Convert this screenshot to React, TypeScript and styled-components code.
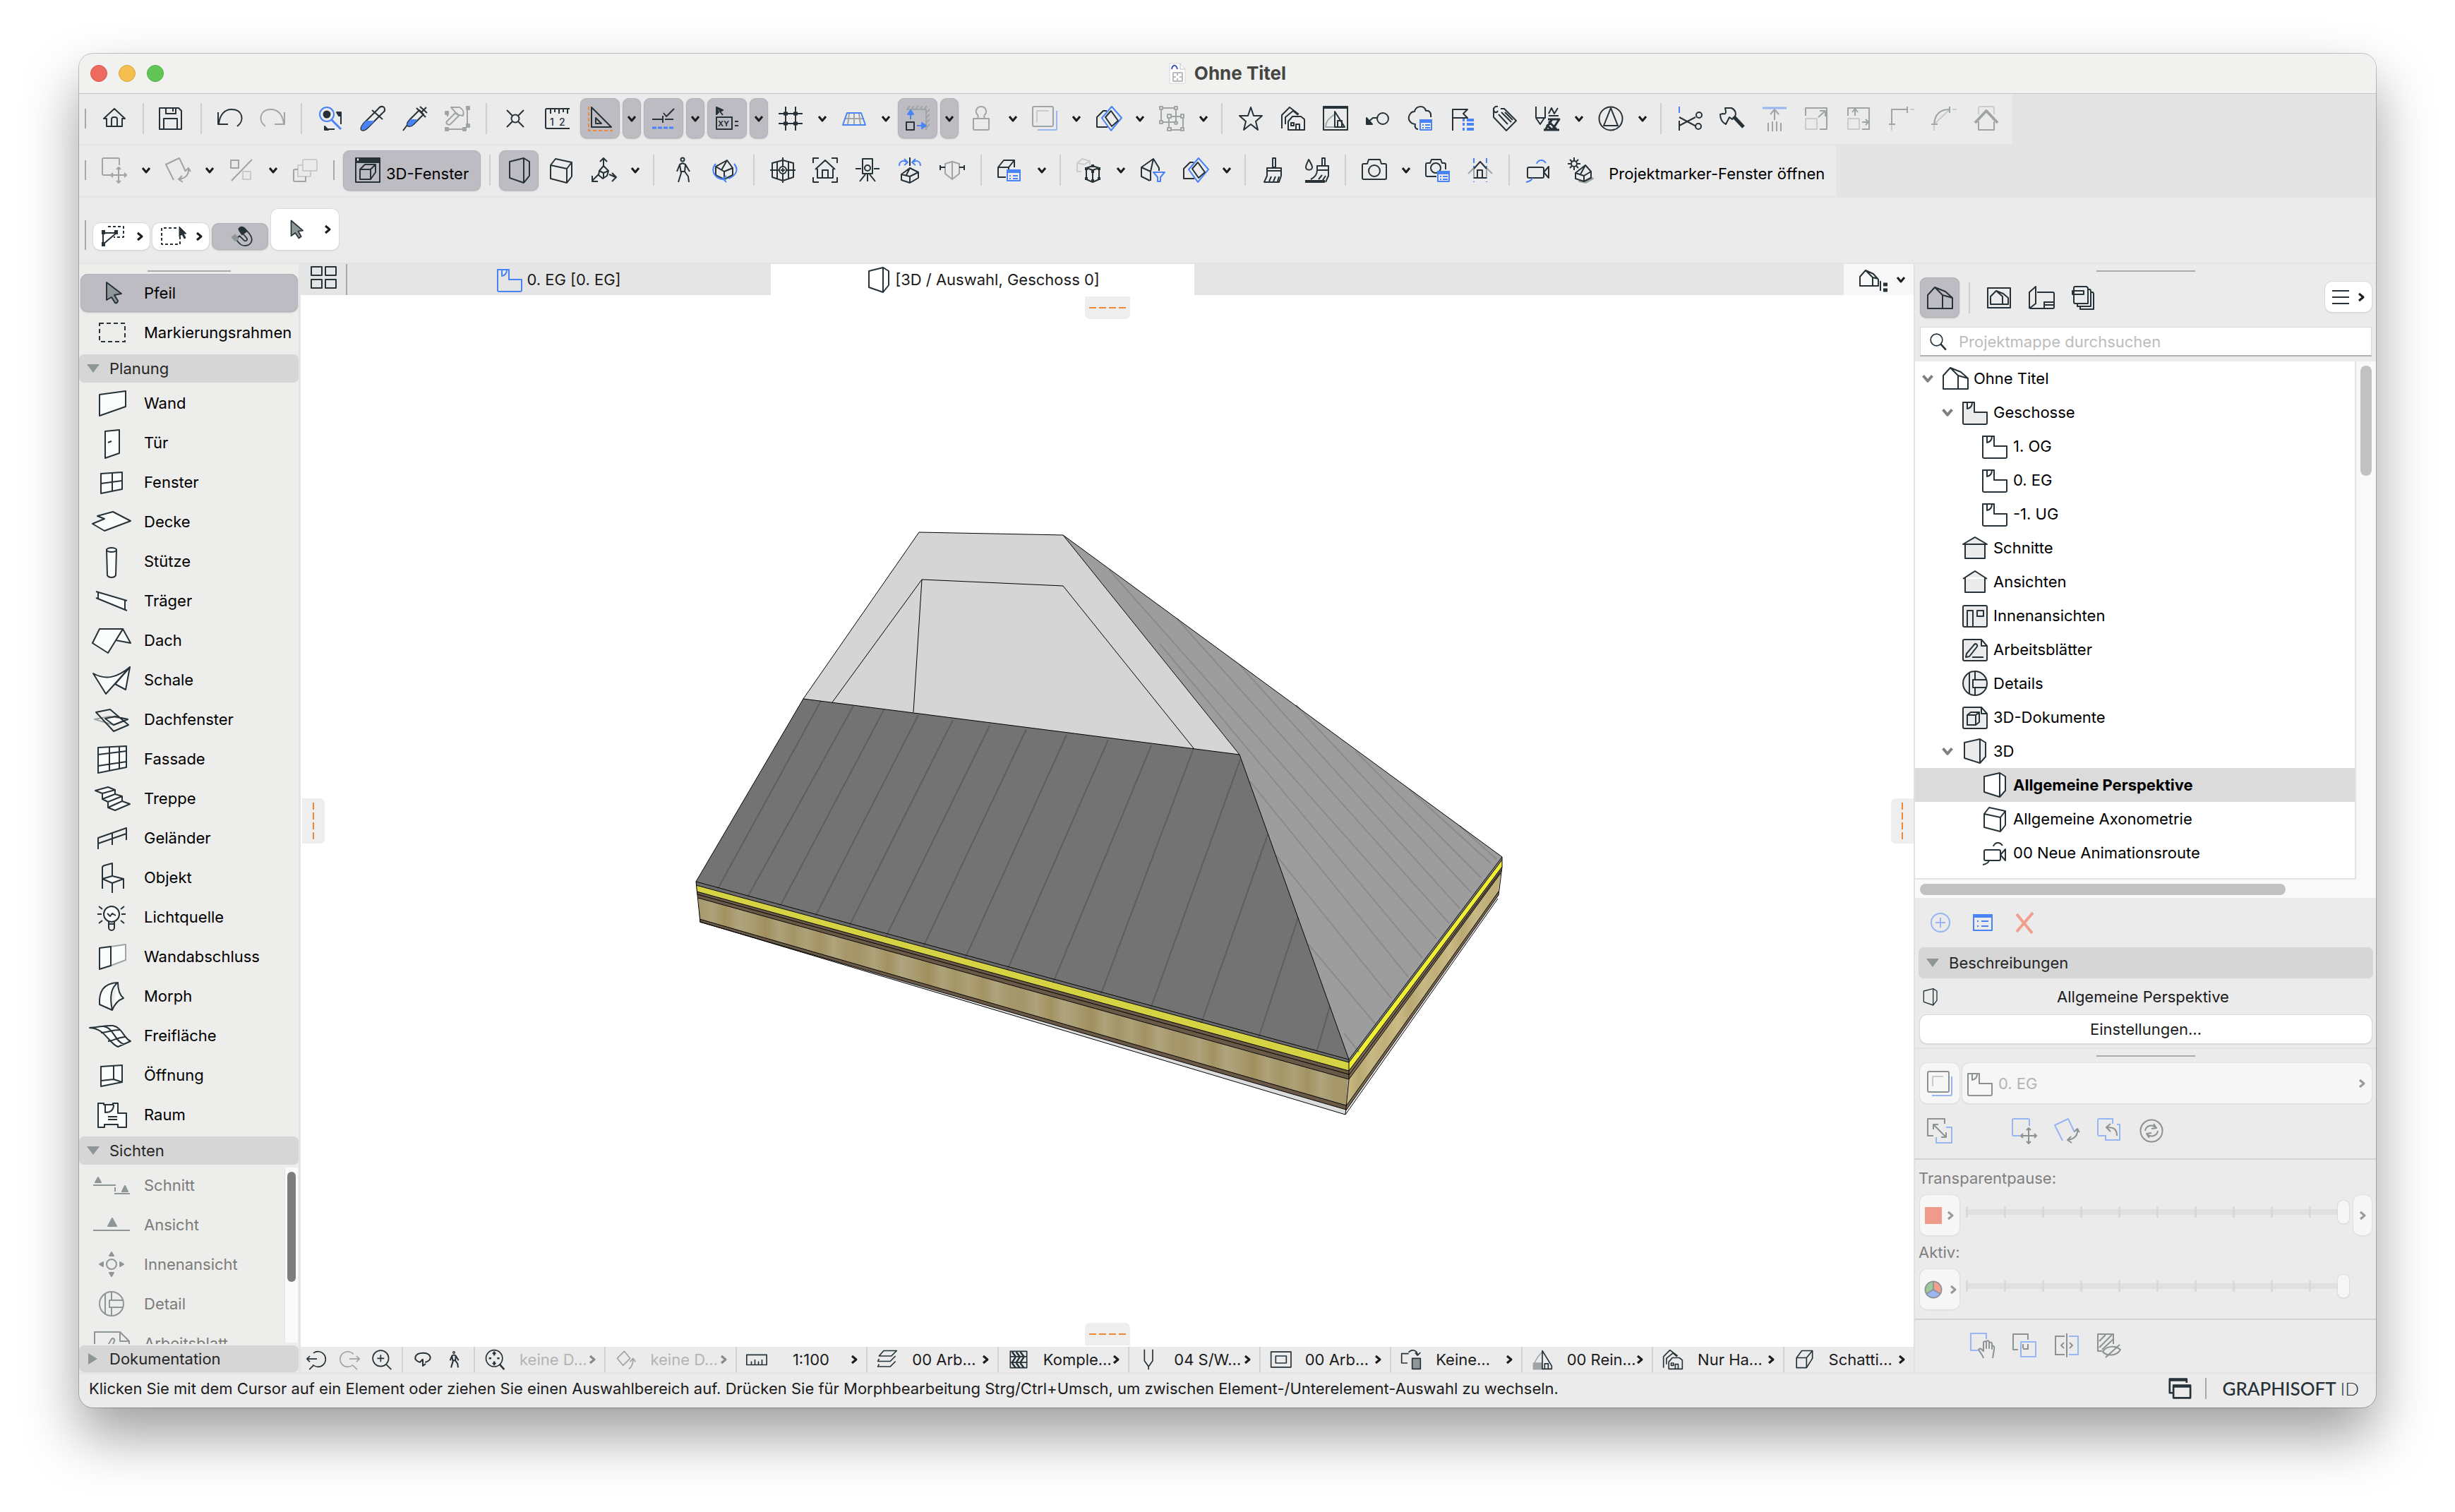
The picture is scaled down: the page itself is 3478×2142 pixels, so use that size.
import React from 'react';
import styled, { createGlobalStyle, css } from 'styled-components';

const K = '#263238';
const B = '#4a83f5';
const LB = '#98b5f3';
const G = '#9fa4a6';
const L = '#c9cccd';
const O = '#ef8733';
const TOOL = '#fafbfb';

/* ---------- icon drawings ---------- */

const P = ({ d, s = 'currentColor', f = 'none', w, dash }: { d: string; s?: string; f?: string; w?: number; dash?: string }) => (
  <path d={d} stroke={s} fill={f} strokeWidth={w} strokeDasharray={dash} />
);
const C = ({ x, y, r, s = 'currentColor', f = 'none' }: { x: number; y: number; r: number; s?: string; f?: string }) => (
  <circle cx={x} cy={y} r={r} stroke={s} fill={f} />
);

const listBadge = (c: string) => (
  <>
    <P d="M18 20h16v14H18z" s={c} f="#ebebeb" />
    <P d="M18 20h16v3H18z" s={c} f={c} />
    <P d="M21 27h2M25 27h7M21 31h2M25 31h7" s={c} />
  </>
);
const cutPlane = (
  <>
    <P d="M17 30H2V16L11 7h5" />
    <P d="M23 1L9 17l13 18 15-18z" s={B} />
    <P d="M22 7l-8 9 9 13 9-8z" />
  </>
);
const houseBig = <P d="M1 33V14L11 3l11 11v19H1zM22 33h14V18L26 9 11 3M22 14l14 4" />;
const plan = <P d="M1 4h16v14h18v15a2 2 0 01-2 2H3a2 2 0 01-2-2zM7 4v9c5-1 7-4 7-9" />;
const persp = <P d="M5 6l20-5 8 5v20l-8 10-20-7zM25 1v34" />;
const axo = <P d="M3 11l7-9 23 5v20l-7 9-23-6zM3 11l23 5 7-9M26 16v20" />;
const walker = (
  <>
    <C x={18} y={3} r={2.5} />
    <P d="M18 8l-4 2-4 10M18 8l4 2 6 10M14 11l2 11-4 13M22 11l-1 9 5 7 1 8M16 20h5" />
  </>
);
const camcorder = (a: string) => (
  <>
    <P d="M5 14h19a2 2 0 012 2v11a2 2 0 01-2 2H5a2 2 0 01-2-2V16a2 2 0 012-2zM26 21l7-8v16z" />
    <P d="M16 9c2-6 9-7 13-1M1 35c6-1 8-3 9-6" s={a} />
  </>
);
const squaresMove = (a: string, b: string) => (
  <>
    <P d="M12 25H3a2 2 0 01-2-2V3a2 2 0 012-2h20a2 2 0 012 2v8" s={a} />
    <P d="M24 14v22M13 25h22M21 17l3-3 3 3M21 33l3 3 3-3M16 22l-3 3 3 3M32 22l3 3-3 3" s={b} />
  </>
);
const squareRotate = (a: string, b: string) => (
  <>
    <P d="M12 32L1 10 20 1l9 19" s={a} />
    <P d="M33 16c1 8-4 14-14 15M29 19l4-4 3 5M24 26l-5 5 6 4" s={b} />
  </>
);
const docOutline = 'M3 4h24l8 9v19a2 2 0 01-2 2H3a2 2 0 01-2-2V6a2 2 0 012-2zM27 4v9h8';
const houses = (
  <>
    <P d="M2 32V13L13 2l13 10M7 26V16l11-9 7 6" />
    <P d="M11 34V22l6-7h12l5 4v15zM22 34v-8h5v8M15 24h4v4h-4z" />
  </>
);
const windowTri = (
  <>
    <P d="M1 3h34v31H1z" />
    <P d="M1 1h34v2H1z" f="currentColor" />
    <P d="M17 30H4c0-8 6-14 13-18" s={G} />
    <P d="M17 30V8l14 22zM21 30v-9h6v9" />
  </>
);

const ICONS: Record<string, React.ReactNode> = {
  home: <P d="M3 18L18 4l15 14h-4v11H7V18zM14 29V19a3 3 0 013-3h2a3 3 0 013 3v10" />,
  save: <P d="M0 3h27l4 4v26H0zM9 3v8h14V3M19 3v5M6 33V18h19v15" />,
  undo: <P d="M1 9v17h14M2 26C3 13 10 5 20 5c16 0 19 16 8 24" />,
  redo: <P d="M35 9v17H21M34 26C33 13 26 5 16 5 0 5-3 21 8 29" s={G} />,
  find: (
    <>
      <C x={13} y={12} r={10} s={B} />
      <C x={13} y={12} r={4.5} f="currentColor" />
      <P d="M20 20l13 13" s={B} w={3} />
      <P d="M33 14v12M12 33h12" />
      <P d="M27 9h6v5h-3zM10 29v5h5z" f="currentColor" />
    </>
  ),
  pipette: (
    <>
      <P d="M2 34c-2-3 1-6 3-9L26 4c2-3 5-4 8-2 2 3 1 6-2 8L11 31c-3 3-6 5-9 3z" />
      <P d="M3 33c-1-3 2-6 6-11h10L10 30c-3 3-5 4-7 3z" f={B} s={B} />
      <P d="M17 6l15 13" />
    </>
  ),
  syringe: (
    <>
      <P d="M1 35l6-8M7 28c-1-5 2-6 4-9L24 6l6 6-14 14c-3 3-6 4-9 2z" />
      <P d="M8 27c0-3 2-5 4-7h8l-6 6c-2 2-4 2-6 1z" f={B} s={B} />
      <P d="M20 3l13 13M27 9l7-7M25 1l10 9" />
    </>
  ),
  hammerNodes: (
    <>
      <P d="M3 22L15 10l5 4L8 26c-3 2-7-1-5-4zM9 2h12c5 3 7 6 5 12l-6-1-5-4zM4 11v4M32 6v22M6 33h22" s={G} />
      <P d="M1 8h4v4H1zM31 1h4v4h-4zM1 31h4v4H1zM31 26h4v4h-4zM26 31h4v4h-4z" s={G} f={G} />
    </>
  ),
  snap: (
    <>
      <C x={18} y={18} r={5.5} />
      <P d="M6 6l8 8M30 6l-8 8M6 30l8-8M30 30l-8-8" />
    </>
  ),
  ruler: (
    <>
      <P d="M35 4H3a2 2 0 00-2 2v24a2 2 0 002 2h32M8 4v7M14 4v5M20 4v7M26 4v5M32 4v7" />
      <text x="7" y="28" fontSize="14" fontWeight="500" fill="currentColor">1</text>
      <text x="20" y="28" fontSize="14" fontWeight="500" fill="currentColor">2</text>
    </>
  ),
  triangle: (
    <>
      <P d="M6 2v28h28zM12 17v8h8z" />
      <P d="M2 1v34h34" s={O} dash="5 3" />
    </>
  ),
  guides: (
    <>
      <P d="M2 19h14M20 19h12M17 14v10M18 10l4 5L33 4" />
      <P d="M2 31h32" s={B} w={3} dash="6 2" />
    </>
  ),
  coords: (
    <>
      <P d="M3 2l9 4-4 2 4 5M3 2v10l3-3z" f="currentColor" />
      <P d="M3 16h22v17H3z" />
      <text x="5" y="29" fontSize="11" fontWeight="700" fill="currentColor">XY</text>
      <P d="M29 22h5M29 28h5" />
    </>
  ),
  grid: (
    <>
      <P d="M1 11h34M1 25h34M11 1v34M25 1v34" />
      <P d="M8 11h6M22 11h6M8 25h6M22 25h6" w={5} />
    </>
  ),
  plane: (
    <>
      <P d="M4 18h28M11 11l-2 16M18 10v17M25 11l2 16" s={G} />
      <P d="M8 10h20l6 17H2z" s={B} />
    </>
  ),
  gravity: (
    <>
      <P d="M2 5h28v29M3 5l4-5M9 5l4-5M15 5l4-5M21 5l4-5M27 5l4-5M30 10l5-5M30 17l5-5M30 24l5-5M30 31l5-5" s={G} />
      <P d="M2 23h11v11H2z" />
      <P d="M8 19V7M17 28h9" s={B} />
      <P d="M4 12l4-6 4 6zM24 24l6 4-6 4z" s={B} f={B} />
    </>
  ),
  stamp: <P d="M7 18h22v14a2 2 0 01-2 2H9a2 2 0 01-2-2zM13 18c2-4 0-5-2-8-1-5 2-9 7-9s8 4 7 9c-2 3-4 4-2 8" s={G} />,
  trace: (
    <>
      <P d="M8 34h25a2 2 0 002-2V7" s={LB} />
      <P d="M3 1h25a2 2 0 012 2v24a2 2 0 01-2 2H3a2 2 0 01-2-2V3a2 2 0 012-2z" s={G} />
      <P d="M7 23V7h17" s={L} />
    </>
  ),
  cutPlane,
  groupNodes: (
    <>
      <P d="M3 3h21v20H3zM14 15h20v19H14z" s={G} />
      <P d="M1 1h4v4H1zM22 1h4v4h-4zM1 21h4v4H1zM12 12h5v5h-5zM31 12h4v5h-4zM12 31h5v4h-5zM31 31h4v4h-4z" s={G} f="#ebebeb" />
      <C x={24} y={24} r={2} s={G} />
    </>
  ),
  star: <P d="M18 2l4 12h12l-9 8 3 12-10-8-10 8 3-12-9-8h12z" />,
  houses,
  windowTri,
  keyArrow: (
    <>
      <C x={25} y={18} r={8} />
      <P d="M17 17h-6l-8 7" />
      <P d="M2 17v9h8z" f="currentColor" />
    </>
  ),
  cloudList: (
    <>
      <P d="M15 33c-4 0-5-4-4-7C3 25-1 18 4 11c2-3 4-3 6-3 2-9 14-9 16-1 5-1 8 3 7 9" />
      {listBadge(B)}
    </>
  ),
  flagList: (
    <>
      <P d="M4 35V5h21l-6 6 6 6H5" />
      <P d="M18 20h3M18 26h3M18 33h3" s={B} w={4} />
      <P d="M24 20h10M24 26h10M24 33h10" s={B} w={4} />
    </>
  ),
  tag: <P d="M2 3v13l18 19 14-14L17 4h-5M8 7c-2 4-6 2-6-2 0-3 3-5 6-4M9 12l13 14M13 9l14 14M18 9l11 11" />,
  penSet: (
    <>
      <P d="M2 1v16h13V1M2 17l6 9 6-9M20 14h14M20 11l4-8 4 8 5-8" />
      <P d="M15 34l10-15h10L25 34M19 19h16M13 34h22M20 22l11 11M17 27l8 7" w={3} />
    </>
  ),
  northArrow: (
    <>
      <C x={18} y={18} r={16.5} />
      <P d="M18 3l10 25H8z" />
    </>
  ),
  scissors: (
    <>
      <P d="M3 1v9" s={B} />
      <P d="M3 21v14M3 16l24 13M3 28l23-12" />
      <C x={31} y={13} r={4} />
      <C x={30} y={29} r={4} />
    </>
  ),
  wrench: (
    <>
      <P d="M1 12l4-1c3 1 4 0 4-3L8 3h9c6 3 7 8 5 12l-4 4-4-3-5 10c-6-3-8-8-8-14z" />
      <P d="M20 15l14 15" w={5} />
    </>
  ),
  elevate: (
    <>
      <P d="M1 3h34" s={LB} w={3} />
      <P d="M18 20V6M12 12l6-7 6 7M9 24v12M15 22v14M21 22v14M27 24v12" s={G} />
    </>
  ),
  resize: (
    <>
      <P d="M2 14V3h30v30H22M20 16l10-9M22 7h8v8" s={G} />
      <P d="M2 18h16v15H2z" s={L} />
    </>
  ),
  stretch: (
    <>
      <P d="M2 14V3h30v30H22M12 14V5M8 9l4-5 4 5M22 23h9M27 19l4 4-4 4" s={G} />
      <P d="M2 18h16v15H2z" s={L} />
    </>
  ),
  corner: (
    <>
      <P d="M4 35V27M30 5h6" s={L} />
      <P d="M4 26V5h22M26 1v9M0 26h9" s={G} />
    </>
  ),
  arc: (
    <>
      <P d="M4 35V27M30 5h6M4 26L26 5" s={L} />
      <P d="M4 26C5 12 12 5 26 5M26 1v9M0 26h9" s={G} />
    </>
  ),
  roofTrim: (
    <>
      <P d="M7 12V4a3 3 0 013-3h16a3 3 0 013 3v8" s={L} />
      <P d="M7 22v12h22V22" s={G} />
      <P d="M2 24L18 7l16 17" s={G} w={4} />
    </>
  ),

  move: squaresMove(G, G),
  rotate: squareRotate(G, G),
  mirror: (
    <>
      <P d="M3 4h11v11H3zM33 3L4 33" s={G} />
      <P d="M20 20h11v11H20z" s={L} />
    </>
  ),
  multiply: (
    <>
      <P d="M17 3h16a2 2 0 012 2v14H15V5a2 2 0 012-2z" s={L} />
      <P d="M15 11H8v16h18v-8" s={L} />
      <P d="M8 17H4a2 2 0 00-2 2v13a2 2 0 002 2h15v-7" s={G} />
    </>
  ),
  window3d: (
    <>
      <P d="M1 3h34v32H1z" />
      <P d="M1 1h34v6H1z" f="currentColor" />
      <P d="M3 3h2" s="#fff" w={3} />
      <P d="M7 17l7-7h15v11l-7 10H7zM7 17h15v14M22 17l7-7" />
    </>
  ),
  persp,
  axo,
  axes: (
    <>
      <P d="M18 13V2M13 6l5-5 5 5M11 24L2 33M2 26v8h8M26 24l9 4M30 22l6 6-6 6" />
      <P d="M18 12l7 7-2 7-6 4-6-5 1-6zM12 19l6 3 7-3M18 22v7" />
    </>
  ),
  walker,
  orbit: (
    <>
      <P d="M5 13L21 4l8 11v10l-12 6-12-6zM5 13l12 7 12-5M17 20v11M13 18L21 4" />
      <P d="M5 9c-8 9-2 20 9 22l6 0M31 9c7 8 3 17-8 21M20 26l-5 4 5 5" s={B} />
    </>
  ),
  lookTo: (
    <>
      <P d="M3 8l15-4 15 4v20l-15 5-15-5zM18 0v36M0 18h36M10 6v24M26 6v24" />
      <C x={18} y={18} r={5} f="#ebebeb" />
      <P d="M18 15v6M15 18h6" />
    </>
  ),
  fitHouse: <P d="M1 8V1h8M27 1h8v7M1 28v7h8M35 28v7h-8M4 17L18 4l14 13M7 16v13h22V16M14 29V18h8v11" />,
  tripod: (
    <>
      <P d="M11 2h14v21H11zM1 16h8M27 16h8M18 23v11M15 24L7 34M21 24l8 10" />
      <C x={18} y={15} r={4} />
    </>
  ),
  align: (
    <>
      <P d="M6 24l12-9 12 6v8l-12 7-12-4zM6 24l12 3 12-6M18 27v8M13 25l5-10" />
      <P d="M3 12c0-7 6-9 11-5M10 2l5 5-5 4M33 12c0-7-6-9-11-5M26 2l-5 5 5 4" s={B} />
      <P d="M18 0v12" />
    </>
  ),
  section: (
    <>
      <P d="M8 9l10-3 10 3v14l-10 8-10-8zM18 6v25" s={G} />
      <P d="M1 14h7M1 11v7M28 14h7M35 11v7" />
    </>
  ),
  boxList: (
    <>
      <P d="M12 28H1V14L9 4h15v10M1 14h15l8-10M16 14v4" />
      <P d="M14 18h18v15H14z" s={B} f="#ebebeb" />
      <P d="M14 18h18v3H14z" s={B} f={B} />
      <P d="M17 26h2M22 26h7M17 30h2M22 30h7" s={B} />
    </>
  ),
  boxNodes: (
    <>
      <P d="M7 20H1V8l7-6 11 3v6M1 8l10 2 8-5" s={L} />
      <P d="M14 15l9-3 9 3v16l-9 4-9-4zM23 18v16M14 15l9 3 9-3" />
      <P d="M12 16h4M21 12h4M30 16h4M12 30h4M21 33h4M30 30h4M21 20h4" w={4} />
    </>
  ),
  filterHouse: (
    <>
      <P d="M14 33L2 27V14L19 2l8 13v4M2 14l13 6L19 2M15 20v13" />
      <P d="M19 21h16l-6 7v6h-4v-6z" s={B} />
    </>
  ),
  brush: <P d="M16 1h4v13h-4zM8 15h20v4H8zM8 19v7l-4 9h21l3-9v-7M11 34l3-7M17 34l3-7M23 34l2-7" />,
  brushDrop: (
    <>
      <P d="M7 3c3 5 5 8 5 11 0 5-9 5-9 0 0-3 2-6 4-11zM26 1h4v11h-4zM19 12h16v6H19zM19 18c0 6-3 10-9 13M35 18v8l-4 9M21 31l5-6M27 32l4-6" />
      <P d="M2 34h28" w={4} />
    </>
  ),
  camera: (
    <>
      <P d="M3 9h5l2-6h16l2 6h5a2 2 0 012 2v18a2 2 0 01-2 2H3a2 2 0 01-2-2V11a2 2 0 012-2z" />
      <C x={18} y={19} r={8} />
    </>
  ),
  cameraList: (
    <>
      <P d="M16 27H3a2 2 0 01-2-2V10a2 2 0 012-2h4l2-5h13l2 5h3a2 2 0 012 2v7" />
      <C x={15} y={15} r={7} />
      {listBadge(B)}
    </>
  ),
  houseLines: (
    <>
      <P d="M9 1v34M27 1v34" s={B} dash="7 4" />
      <P d="M1 23L9 15v14M35 23l-8-8v14" s={G} />
      <P d="M9 16l9-10 9 10M9 29h18M14 29V18h7v11" />
    </>
  ),
  camcorder: camcorder(B),
  sunHouse: (
    <>
      <C x={9} y={9} r={4} />
      <P d="M9 0v4M9 14v4M0 9h4M14 9h4M3 3l3 3M12 12l3 3M15 3l-3 3M3 15l3-3" />
      <P d="M16 34l10 2 10-6-3-2-9 5z" s={G} f={G} />
      <P d="M11 22L25 11l8 9v9l-10 5-12-4zM11 22l12 4 10-6M23 26v8M18 24l7-13" />
    </>
  ),

  marquee: (
    <>
      <P d="M10 4h22v15H18" dash="4 3" />
      <P d="M3 13h19L3 29z" />
      <P d="M1 12h5M19 12h5M1 29h5" w={6} />
    </>
  ),
  marqueeArrow: (
    <>
      <P d="M28 18v11H2V6h22" dash="4 3" />
      <P d="M27 4v14l4-3 3 6 2-1-3-6h4z" f="currentColor" w={1} />
    </>
  ),
  magnet: (
    <>
      <P d="M14 6c2-4 6-4 9-1l8 9c6 8 4 15-3 18-6 2-10 1-15-5l-4-5 6-5 7 7c3 3 7-1 4-4z" />
      <P d="M14 6c3-4 6-3 8-1l4 5-7 5-4-6z" f="currentColor" />
      <P d="M3 19l5-4 5 7-5 3z" s="#8f9698" f="#8f9698" />
    </>
  ),
  arrow: <P d="M9 3v26l7-5 6 9 4-3-5-9 8-1z" f="#8f9698" />,

  houseBig,
  houseView: (
    <>
      <P d="M2 4h32v28H2z" />
      <P d="M6 27V16l8-8 9 8v11zM23 27h8V18l-7-6-10-4" />
    </>
  ),
  layoutBook: <P d="M1 33V10L10 2v24L1 33M12 10h22a2 2 0 012 2v19a2 2 0 01-2 2H2M22 33v-9h13M22 28h13" />,
  publisher: (
    <>
      <P d="M6 2h16l2 2v22H6a2 2 0 01-2-2V4a2 2 0 012-2z" />
      <P d="M2 8h16v5H2z" />
      <P d="M25 6h2l1 2v22H9v-3M29 10h2l1 2v22H13v-3" />
    </>
  ),
  search: (
    <>
      <C x={15} y={15} r={10} />
      <P d="M22 22l9 10" w={3} />
    </>
  ),
  plan,
  planGray: <P d="M1 4h16v14h18v15a2 2 0 01-2 2H3a2 2 0 01-2-2V4zM7 4v9c5-1 7-4 7-9" f="#ebebeb" />,
  elevation1: (
    <>
      <P d="M4 13v20h28V13" f="#ebebeb" />
      <P d="M1 13h34L18 3z" f="#ebebeb" />
    </>
  ),
  elevation2: <P d="M4 12v21h28V12M1 14L18 3l17 11" f="#ebebeb" />,
  interior: (
    <>
      <P d="M3 4h30a2 2 0 012 2v26a2 2 0 01-2 2H3a2 2 0 01-2-2V6a2 2 0 012-2z" f="#ebebeb" />
      <P d="M7 34V11h8v23M21 11h9v8h-9z" />
    </>
  ),
  worksheet: (
    <>
      <P d={docOutline} f="#ebebeb" />
      <P d="M6 24L17 11c2-2 5 0 4 3L10 28l-5 1zM14 29h16" />
    </>
  ),
  detail: (
    <>
      <C x={18} y={18} r={17} f="#ebebeb" />
      <P d="M10 3v30M18 1v12M18 24v11M35 13H15v11h19" />
    </>
  ),
  doc3d: (
    <>
      <P d={docOutline} f="#ebebeb" />
      <P d="M7 15l5-4h12v14l-5 4H7zM7 15h12v14M19 15l5-4" />
    </>
  ),
  perspGray: <P d="M3 6l22-5 8 5v20l-8 9-22-7zM25 1v34" f="#ebebeb" />,
  perspWhite: <P d="M3 6l22-5 8 5v20l-8 9-22-7zM25 1v34" f="#fff" />,
  camcorderDark: camcorder('currentColor'),
  table: <P d="M6 9h24v24H6z" f="currentColor" />,

  add: (
    <>
      <C x={18} y={18} r={13} s={LB} />
      <P d="M18 11v14M11 18h14" s={LB} />
    </>
  ),
  list: (
    <>
      <P d="M5 7h26v22H5z" s={B} />
      <P d="M5 7h26v3H5z" s={B} f={B} />
      <P d="M10 16h2M16 16h10M10 23h2M16 23h10" s={B} />
    </>
  ),
  remove: <P d="M6 6l22 27M29 4L6 31" s="#ef9f8b" w={4} />,
  traceBig: (
    <>
      <P d="M7 35h26a2 2 0 002-2V8" s={LB} />
      <P d="M3 1h26a2 2 0 012 2v25a2 2 0 01-2 2H3a2 2 0 01-2-2V3a2 2 0 012-2z" s="#8c9294" />
      <P d="M8 22V8h15" s={L} />
    </>
  ),
  swap: (
    <>
      <P d="M27 13h8v22H13v-8" s={LB} />
      <P d="M25 8V1H1v24h8M9 9l18 18M9 16V9h7M27 20v7h-7" s="#8c9294" />
    </>
  ),
  moveBlue: squaresMove(LB, '#8c9294'),
  rotateBlue: squareRotate(LB, '#8c9294'),
  reset: (
    <>
      <P d="M14 25H4a2 2 0 01-2-2V3a2 2 0 012-2h19v7M13 25v6h20V9h-4" s={LB} />
      <P d="M29 25c0-9-4-12-14-12M20 8l-6 5 6 6" s="#8c9294" />
    </>
  ),
  refresh: (
    <>
      <C x={18} y={18} r={15.5} s="#8c9294" />
      <P d="M9 18c1-7 9-10 15-5M21 8l4 6-7 1M27 18c-1 7-9 10-15 5M15 28l-4-6 7-1" s="#8c9294" />
    </>
  ),
  colorWheel: (
    <>
      <path d="M18 18V5a13 13 0 0111.300 19.500z" fill="#f1a08d" />
      <path d="M18 18l11.300 6.500a13 13 0 01-22.600 0z" fill="#9cb6f2" />
      <path d="M18 18L6.700 24.500A13 13 0 0118 5z" fill="#9cc99d" />
      <C x={18} y={18} r={13} s="#8c9294" />
      <P d="M18 18V5M18 18l11 6.500M18 18L7 24.500" s="#8c9294" />
    </>
  ),
  hand: (
    <>
      <P d="M12 25H2V1h22v8" s={LB} />
      <P d="M20 36c-1-5-5-8-7-12 2-3 4-1 7 2V13c3-2 4 0 4 1v8-10c3-2 4 0 4 2v8-8c3-1 4 0 4 2v7-4c3-1 4 1 3 5l-2 12" s="#8c9294" />
    </>
  ),
  overlap: (
    <>
      <P d="M9 24H2V2h21v8M16 22v-6M16 23h7v-7" s="#8c9294" />
      <P d="M13 13h21v21H13z" s={LB} />
    </>
  ),
  splitter: (
    <>
      <P d="M15 5H2v26h13M18 1v34M14 14l-4 4 4 4M22 14l4 4-4 4" s="#8c9294" />
      <P d="M21 5h13v26H21" s={LB} />
    </>
  ),
  hideHatch: (
    <>
      <P d="M8 26H2V2h22v14M4 12L13 3M4 21L22 3M8 24L24 9" s="#8c9294" />
      <P d="M9 27c5-9 18-9 25-3-5 9-19 10-25 3zM13 35L33 17" s="#8c9294" />
    </>
  ),

  zoomPrev: <P d="M12 7a13 13 0 11-1 20M1 17h17M6 12l-5 5 5 5M12 28L5 35" />,
  zoomNext: <P d="M25 9a13 13 0 10-1 18M35 17H18M30 12l5 5-5 5M24 28l7 7" s={G} />,
  zoomIn: (
    <>
      <C x={16} y={16} r={13.5} />
      <P d="M16 10v12M10 16h12M25 26l9 9" />
    </>
  ),
  orbitSmall: <P d="M12 24C-5 19 1 4 18 4s23 14 5 20M18 32V17M18 17l-6 7M17 32l7-5" w={3} />,
  walkerSmall: (
    <>
      <C x={18} y={3} r={2} />
      <P d="M18 8l-4 2-4 10M18 8l4 2 6 10M14 11l2 11-4 13M22 11l-1 9 5 7 1 8M16 20h5" w={3} />
    </>
  ),
  zoomFit: (
    <>
      <C x={17} y={16} r={14} />
      <P d="M17 6v5M17 21v5M8 16h4M22 16h4M26 26l8 9" w={3} />
      <P d="M14 8l3-4 3 4zM14 24l3 4 3-4z" f="currentColor" w={1} />
    </>
  ),
  tilt: <P d="M4 16L16 4l10 12L14 28zM24 34c6-4 7-9 7-16M26 22l5-6 4 6" s={G} />,
  scale: <P d="M1 10h34v17H1zM9 27v-6M15 27v-9M21 27v-6M27 27v-9" />,
  layers: <P d="M4 12L12 3h22l-9 9zM4 17l-2 4h21l9-9M4 26l-2 4h21l9-9" />,
  hatch: (
    <>
      <P d="M4 4h28v28H4zM4 13h28M4 23h28" />
      <P d="M7 5l6 8M14 5l6 8M21 5l6 8M7 23l6-9M14 23l6-9M21 23l6-9M7 24l6 8M14 24l6 8M21 24l6 8" w={3} />
    </>
  ),
  pen: <P d="M10 1v19l7 10 7-10V1M17 30v5" />,
  frame: <P d="M2 5h34v26H2zM10 12h18v12H10z" />,
  replace: (
    <>
      <P d="M12 24H2V8h12M14 6c4-6 14-5 15 4M25 6l4 5 5-5" />
      <P d="M20 16h14v18H20z" f="#8f9698" />
    </>
  ),
  renovation: (
    <>
      <P d="M18 34H3c0-10 4-18 14-28" s={G} />
      <P d="M3 24h14v10H3z" s={G} f={G} />
      <P d="M18 34V3l16 26v5zM22 34v-9h6v9" />
    </>
  ),
  boxSmall: <P d="M5 15L14 3h18v13L22 32H5zM5 15h17v17M22 15L32 3" />,
  navHouse: (
    <>
      <P d="M2 27V14L10 5l10 10v12zM20 27h8V18L21 10 10 5M20 15l8 2" />
      <P d="M31 20v14" />
      <P d="M35 25h6M35 33h6" w={5} />
    </>
  ),
  grid4: <P d="M1 3h15v12H1zM21 3h15v12H21zM1 21h15v12H1zM21 21h15v12H21z" />,
  windows: <P d="M8 25H2V3h27v6M8 13h27v20H8zM8 15h27M2 5h27" w={3} />,
};

/* wider drawings of the toolbox, 60 x 40 */
const TOOL_ICONS: Record<string, React.ReactNode> = {
  Pfeil: <P d="M22 5v25l7-4 5 8c2 1 4-1 4-3l-5-8 10-2z" f="#8f9698" />,
  Markierungsrahmen: <P d="M12 7h36v26H12z" dash="6 4" />,
  Wand: <P d="M12 8l37-5v22L12 38z" f={TOOL} />,
  Tür: <><P d="M20 4l20-2v33l-20 7z" f={TOOL} /><P d="M24 20l5-2" /></>,
  Fenster: <><P d="M14 8l30-2v24l-30 6z" f={TOOL} /><P d="M30 7v26M14 22l30-4" /></>,
  Decke: <P d="M2 23l17 10 37-14L31 6 9 12l10 4z" f={TOOL} />,
  Stütze: <><P d="M22 3l1 37c2 4 10 4 12 0l1-37" f={TOOL} /><ellipse cx="29" cy="4" rx="7" ry="3" stroke="currentColor" fill={TOOL} /></>,
  Träger: <><P d="M8 8l42 11v14L8 16z" f={TOOL} s="none" /><P d="M7 7l44 13M7 16l44 18M10 8v9M48 19v14" /></>,
  Dach: <><P d="M45 4l11 20-21-4z" f={TOOL} /><P d="M2 24l10-20h33L24 38z" f={TOOL} /></>,
  Schale: <><P d="M55 2l-6 32-15-8z" f={TOOL} /><P d="M3 11c18 10 34 6 52-9L21 40z" f={TOOL} /></>,
  Dachfenster: <><P d="M5 20l21-4 26 4-20 8z" s={G} f={TOOL} /><P d="M7 10l20-4 26 22-21 9zM20 19l14-3 18 4-20 8z" /></>,
  Fassade: <><P d="M10 4l40-2v30L10 40z" f={TOOL} /><P d="M26 3v34M40 3v31M10 14l40-5M10 30l40-6" /></>,
  Treppe: <P d="M6 9l18-5 10 4v6l10 3v7l11 4-21 9-10-4v-8l-8-4v-8zM16 13l18-5M16 21l18-7M24 25l20-8M24 33l20-9" f={TOOL} />,
  Geländer: <P d="M10 36V20L50 6v17M10 28l40-14M30 13v17" />,
  Objekt: <><P d="M16 22l14-4 16 4-16 6z" f={TOOL} /><P d="M16 36V6q0-2 3-3l11-3v18M46 22v14M30 28v14" /></>,
  Lichtquelle: <><circle cx="29" cy="16" r="11" stroke="currentColor" fill={TOOL} /><P d="M25 27v8a4 4 0 008 0v-8M25 30h8M23 15l4 4 3-4 5 3M9 16h6M43 16h6M11 5l5 4M47 5l-5 4M11 29l5-4M47 29l-5-4" /></>,
  Wandabschluss: <><P d="M28 6l21-3v22l-21 8z" s={G} f={TOOL} /><P d="M12 8l16-2v27l-16 5z" f={TOOL} /></>,
  Morph: <P d="M12 32C11 14 17 2 38 1c0 12 3 18 8 22-8 3-13 9-16 17zM38 1c-10 7-12 20-8 39" f={TOOL} />,
  Freifläche: <P d="M-2 9c10 0 20-4 33-3 14 3 15 18 25 22l-18 8C24 30 20 10-2 9zM14 16c8 0 15-4 27-4M24 28c6 0 12-5 24-6M18 7c14 2 16 22 28 25" f={TOOL} />,
  Öffnung: <><P d="M14 8l30-2v24l-30 6z" f={TOOL} /><P d="M32 7v19M14 28l18-2 12 4" /></>,
  Raum: <><P d="M10 4h8v2h13V4h7v14h12v20H38v-4H19v4h-9z" f={TOOL} /><P d="M20 6v11c8 0 12-4 12-11M24 23h13M24 27h13" /></>,
  Schnitt: <><P d="M10 9l4 7H6zM48 21l4 8h-8z" f="currentColor" /><P d="M3 20h32M34 23v6M33 32h22" /></>,
  Ansicht: <><P d="M30 11l6 11H24z" f="currentColor" /><P d="M3 28h52" /></>,
  Innenansicht: <><C x={29} y={20} r={7} /><P d="M29 3l3 5h-6zM29 37l3-5h-6zM12 20l5-3v6zM46 20l-5-3v6z" f="currentColor" /></>,
  Detail: <><C x={29} y={20} r={17} /><P d="M20 6v28M29 3v12M29 25v12M46 15H26v10h20" /></>,
  Arbeitsblatt: <><P d="M5 4h36l13 13v19H5zM41 4v13h13" /><P d="M20 30l9-16c2-2 5 0 4 3l-6 13" /></>,
};

/* ---------- shared parts ---------- */

const GlobalStyle = createGlobalStyle`
  *, *::before, *::after { box-sizing: border-box; }
  body { margin: 0; background: #fff; }
  body, button, input, select {
    font-family: Inter, "Liberation Sans", sans-serif;
    font-size: 22px;
    line-height: 28px;
    color: #1b1b1b;
  }
  button, select, input { margin: 0; padding: 0; border: 0; background: none; }
  ul { margin: 0; padding: 0; list-style: none; }
`;

const Glyph = styled.svg<{ $w?: number; $h?: number }>`
  width: ${p => p.$w ?? 36}px;
  height: ${p => p.$h ?? 36}px;
  flex: none;
  overflow: visible;
  color: ${K};
  stroke-width: 2;
  stroke-linejoin: round;
`;

const Icon = ({ name, size = 36 }: { name: string; size?: number }) => (
  <Glyph viewBox="0 0 36 36" $w={size} $h={size} aria-hidden="true">{ICONS[name]}</Glyph>
);

const Chevron = ({ dir, color = '#1c1c1c', size = 14 }: { dir: 'down' | 'right'; color?: string; size?: number }) => (
  <Glyph viewBox="0 0 14 14" $w={size} $h={size} aria-hidden="true">
    <path d={dir === 'down' ? 'M2 4l5 6 5-6' : 'M4 2l6 5-6 5'} stroke={color} strokeWidth={3} fill="none" />
  </Glyph>
);

const Desktop = styled.div`
  min-height: 100vh;
  height: 100vh;
  padding: 76px 112px 148px;
  display: flex;
  background: #fff;
`;

const Window = styled.div`
  flex: 1;
  min-width: 0;
  display: flex;
  flex-direction: column;
  border-radius: 20px;
  overflow: hidden;
  background: #ebebeb;
  box-shadow: 0 0 0 1px rgba(0, 0, 0, 0.22), 0 40px 80px rgba(0, 0, 0, 0.38);
`;

const TitleBar = styled.header`
  height: 57px;
  flex: none;
  position: relative;
  display: flex;
  align-items: center;
  justify-content: center;
  gap: 12px;
  background: #f1f1ef;
  border-bottom: 1px solid #c6c6c6;
`;

const Lights = styled.div`
  position: absolute;
  left: 16px;
  top: 16px;
  display: flex;
  gap: 16px;
`;

const Light = styled.button<{ $c: string; $e: string }>`
  width: 24px;
  height: 24px;
  border-radius: 50%;
  background: ${p => p.$c};
  border: 1px solid ${p => p.$e};
`;

const Title = styled.h1`
  margin: 0;
  font-size: 26px;
  line-height: 32px;
  font-weight: 700;
  color: #454543;
`;

const ToolbarStrip = styled.div`
  flex: none;
  display: flex;
  background: #e4e4e4;
  border-bottom: 2px solid #e4e4e4;
`;

const Toolbar = styled.div<{ $full?: boolean; $h: number }>`
  display: flex;
  align-items: ${p => (p.$full ? 'flex-end' : 'center')};
  gap: 4px;
  height: ${p => p.$h}px;
  padding: ${p => (p.$full ? '0 8px 18px' : '0 8px 2px')};
  flex: ${p => (p.$full ? 1 : 'none')};
  background: #ebebeb;
`;

const Grip = styled.span<{ $before?: number; $after: number; $h?: number }>`
  width: 2px;
  height: ${p => p.$h ?? 28}px;
  margin: 0 ${p => p.$after}px 0 ${p => p.$before ?? 0}px;
  background: #a9a9a9;
`;

const Divider = styled.span<{ $gap?: number }>`
  width: 2px;
  height: 44px;
  margin: 0 ${p => p.$gap ?? 8}px;
  background: #cfcfcf;
`;

const pressed = css`
  background: #bdbcc2;
  box-shadow: inset 0 0 0 1px #b3b2b8, 0 1px 2px rgba(0, 0, 0, 0.2);
`;

const ToolButton = styled.button<{ $on?: boolean; $kind?: 'arrow' | 'label' | 'text' }>`
  height: 57px;
  flex: none;
  display: flex;
  align-items: center;
  justify-content: center;
  gap: 8px;
  border-radius: 9px;
  width: ${p => (p.$kind === 'arrow' ? '26px' : p.$kind ? 'auto' : '56px')};
  padding: ${p => (p.$kind === 'label' ? '0 17px' : p.$kind === 'text' ? '0 8px' : '0')};
  white-space: nowrap;
  color: #000;
  ${p => p.$on && pressed}
`;

const LowLabel = styled.span`
  padding-top: 10px;
`;

const PillButton = styled.button<{ $on?: boolean; $tall?: boolean }>`
  width: ${p => (p.$tall ? 96 : 80)}px;
  height: ${p => (p.$tall ? 58 : 38)}px;
  padding-left: ${p => (p.$tall ? 12 : 3)}px;
  display: flex;
  align-items: center;
  justify-content: center;
  gap: ${p => (p.$tall ? 22 : 12)}px;
  border-radius: 10px;
  background: #fff;
  box-shadow: 0 0 0 1px #dcdcdc, 0 1px 2px rgba(0, 0, 0, 0.25);
  ${p => p.$on && pressed}
`;

const Main = styled.div`
  flex: 1;
  min-height: 0;
  display: flex;
`;

/* ---------- toolbox ---------- */

const Toolbox = styled.nav`
  width: 314px;
  flex: none;
  display: flex;
  flex-direction: column;
  background: #ededeb;
  border-right: 3px solid #e4e4e4;
`;

const PaletteHandle = styled.span<{ $w: number }>`
  flex: none;
  align-self: center;
  width: ${p => p.$w}px;
  height: 2px;
  margin: 9px 0 2px;
  background: #ababab;
`;

const Tool = styled.button<{ $on?: boolean; $dim?: boolean }>`
  flex: none;
  width: calc(100% - 3px);
  height: ${p => (p.$on ? 54 : 56)}px;
  margin: ${p => (p.$on ? '1px' : '0')} 1px ${p => (p.$on ? '1px' : '0')} 2px;
  padding-left: 15px;
  display: flex;
  align-items: center;
  gap: 15px;
  border-radius: 10px;
  color: ${p => (p.$dim ? '#7c7c7a' : '#000')};
  ${p => p.$on && pressed}
  svg { color: ${p => (p.$dim ? '#8f9698' : K)}; }
`;

const SectionHead = styled.button<{ $panel?: boolean; $last?: boolean }>`
  flex: none;
  height: ${p => (p.$panel ? 44 : p.$last ? 38 : 40)}px;
  margin: ${p => (p.$panel ? '0 4px 0 5px' : p.$last ? '2px 0 0' : '3px 0 1px')};
  padding: 0 11px;
  display: flex;
  align-items: center;
  gap: 14px;
  border-radius: 7px;
  background: #d6d6d6;
  color: #262626;
`;

const Tri = ({ right }: { right?: boolean }) => (
  <Glyph viewBox="0 0 18 18" $w={18} $h={18} aria-hidden="true">
    <path d={right ? 'M2 1v16l13-8z' : 'M0 3h18L9 15z'} fill="#8f9698" />
  </Glyph>
);

const ViewsArea = styled.div`
  flex: 1;
  min-height: 0;
  display: flex;
  overflow: hidden;
`;

const ViewsList = styled.div`
  flex: 1;
  overflow: hidden;
`;

const ViewsScroll = styled.div`
  width: 19px;
  margin: 3px 1px 2px 0;
  padding: 6px 3px;
  background: #fafafa;
  border-left: 1px solid #e2e2e2;
  &::before {
    content: '';
    display: block;
    width: 12px;
    height: 156px;
    border-radius: 6px;
    background: #7d7d7d;
  }
`;

/* ---------- centre ---------- */

const Center = styled.section`
  flex: 1;
  min-width: 0;
  display: flex;
  flex-direction: column;
  background: #fff;
`;

const TabBar = styled.div`
  flex: none;
  height: 44px;
  display: flex;
  background: #e5e5e5;
`;

const TabOverview = styled.button`
  width: 66px;
  border-right: 2px solid #a9a9a9;
`;

const Tab = styled.button<{ $on?: boolean }>`
  width: 600px;
  display: flex;
  align-items: center;
  justify-content: center;
  gap: 6px;
  background: ${p => (p.$on ? '#fff' : 'transparent')};
`;

const BluePlan = styled.span`
  display: flex;
  svg { color: ${B}; }
`;

const TabNavigator = styled.button`
  width: 99px;
  margin-left: auto;
  padding-left: 9px;
  display: flex;
  align-items: center;
  justify-content: center;
  gap: 17px;
  background: #f8f8f8;
`;

const Canvas = styled.main`
  flex: 1;
  min-height: 0;
  position: relative;
  display: flex;
  align-items: center;
  justify-content: center;
  padding: 0 18px 8px 0;
`;

const EdgeHandle = styled.span<{ $side: 'top' | 'bottom' | 'left' | 'right' }>`
  position: absolute;
  display: flex;
  align-items: center;
  justify-content: center;
  background: #eee;
  ${p => (p.$side === 'top' || p.$side === 'bottom' ? 'width: 64px; height: 32px; left: calc(50% - 32px);' : 'width: 32px; height: 64px; top: calc(50% - 32px);')}
  ${p => p.$side === 'top' && 'top: 2px; border-radius: 0 0 7px 7px;'}
  ${p => p.$side === 'bottom' && 'bottom: 2px; border-radius: 7px 7px 0 0;'}
  ${p => p.$side === 'left' && 'left: 2px; border-radius: 0 7px 7px 0;'}
  ${p => p.$side === 'right' && 'right: 0; border-radius: 7px 0 0 7px;'}
  &::before {
    content: '';
    ${p =>
      p.$side === 'top' || p.$side === 'bottom'
        ? `width: 52px; height: 2px; background: repeating-linear-gradient(90deg, ${O} 0 10px, transparent 10px 14px);`
        : `width: 2px; height: 52px; background: repeating-linear-gradient(${O} 0 10px, transparent 10px 14px);`}
  }
`;

const Model = styled.svg`
  width: 1200px;
  height: 880px;
  flex: none;
`;

const frontSeams = [
  [203, 274, 57, 540], [249, 281, 99, 552], [292, 287, 145, 565], [341, 294, 195, 579], [390, 301, 243, 593],
  [442, 309, 295, 608], [494, 314, 348, 622], [551, 322, 407, 639], [610, 329, 467, 655], [671, 337, 532, 673],
  [731, 341, 599, 691], [797, 357, 670, 710], [836, 463, 742, 730], [879, 581, 823, 751], [924, 707, 905, 772],
];
const sideSeams = [
  [944, 745, 965, 771], [893, 618, 988, 731], [848, 493, 1011, 695], [811, 388, 1035, 665], [683, 193, 1055, 638],
  [611, 88, 1075, 611], [708, 158, 1093, 589], [796, 223, 1108, 568], [876, 280, 1124, 545], [960, 345, 1138, 524],
  [1036, 399, 1152, 504], [1108, 451, 1160, 498],
];
const woodTones = ['#a5966a', '#aea27a', '#a39260', '#afa47e', '#a99c70', '#a18f5d', '#aea27a', '#a49566', '#ada178', '#a39262', '#afa47c', '#a6976a'];
const sideTones = ['#cbbb86', '#b9a872', '#c6b985', '#bfae77'];

const RoofModel = () => (
  <Model viewBox="0 0 1200 880" role="img" aria-label="Walmdach in Allgemeiner Perspektive">
    <defs>
      <linearGradient id="wood" x1="0" y1="0" x2="1" y2="0">
        {[0, 1, 2, 3].flatMap(n => woodTones.map((c, i) => <stop key={n * 12 + i} offset={(n * 12 + i) / 48} stopColor={c} />))}
      </linearGradient>
      <linearGradient id="woodSide" x1="0" y1="0" x2="1" y2="0">
        {[0, 1, 2].flatMap(n => sideTones.map((c, i) => <stop key={n * 4 + i} offset={(n * 4 + i) / 12} stopColor={c} />))}
      </linearGradient>
    </defs>
    <path d="M31 584L32 587 946 860 947 853z" fill="#dcdcdc" />
    <path d="M26 530L951 782V786L26 535z" fill="#6b6b6b" />
    <path d="M26 535L951 786V798L27 544z" fill="#d5d243" />
    <path d="M27 544L951 798V810L29 553z" fill="#6a5946" />
    <path d="M29 553L950 810 947 847 31 583z" fill="url(#wood)" />
    <path d="M31 583L947 847V853L31 587z" fill="#6a5946" />
    <path d="M951 782L1168 495V500L951 786z" fill="#808080" />
    <path d="M951 786L1168 499V509L951 798z" fill="#f0ef35" />
    <path d="M951 798L1168 509L1166 519 951 810z" fill="#7a6853" />
    <path d="M951 810L1166 518 1163 544 947 848z" fill="url(#woodSide)" />
    <path d="M947 848L1163 544V549L947 854z" fill="#7a6853" />
    <path d="M342 35L546 39 796 350 178 271z" fill="#d5d5d5" />
    <path d="M178 271L796 350 951 782 26 530z" fill="#737373" />
    <path d="M546 39L1168 495 951 782 796 350z" fill="#9d9d9d" />
    <g stroke="#5e5e5e" strokeWidth="2">
      {frontSeams.map(([a, b, c, d]) => <line key={a} x1={a} y1={b} x2={c} y2={d} />)}
    </g>
    <g stroke="#8b8b8b" strokeWidth="2">
      {sideSeams.map(([a, b, c, d]) => <line key={a} x1={a} y1={b} x2={c} y2={d} />)}
    </g>
    <g stroke="#000" fill="none" strokeWidth="1">
      <path d="M342 35L546 39 796 350 178 271zM178 271L26 530 951 782 796 350M546 39L1168 495 951 782" />
      <path d="M219 276L346 102 546 111 731 341M346 102L334 290" />
      <path d="M26 530L32 587 946 860M26 535L951 786M27 544L951 798M28 548L951 803M29 553L951 810M31 583L947 847M31 587L947 853" />
      <path d="M951 782V810L946 860M1168 495L1168 509 1163 549M951 786L1168 499M951 798L1168 509M951 804L1167 514M951 810L1166 518M947 848L1163 544M947 854L1163 549M946 860L1162 554" />
    </g>
  </Model>
);

const ViewBar = styled.div`
  flex: none;
  height: 36px;
  display: flex;
  background: #ebebeb;
`;

const NavGroup = styled.div<{ $w: number; $gap: number }>`
  width: ${p => p.$w}px;
  flex: none;
  padding-right: 5px;
  display: flex;
  align-items: center;
  justify-content: center;
  gap: ${p => p.$gap}px;
  & + & { border-left: 2px solid #d2d2d2; padding: 0; }
`;

const NavButton = styled.button`
  display: flex;
`;

const Option = styled.label<{ $inset?: boolean }>`
  flex: 1 1 186px;
  min-width: 0;
  display: flex;
  align-items: center;
  gap: 20px;
  padding: 0 10px 0 13px;
  border-left: 2px solid #d2d2d2;
  select { padding-left: ${p => (p.$inset ? 16 : 0)}px; }
`;

const OptionSelect = styled.select`
  appearance: none;
  flex: 1;
  min-width: 0;
  height: 32px;
  margin-right: -24px;
  color: #1b1b1b;
  opacity: 1;
  &:disabled { color: #b4b4b4; opacity: 1; }
`;

/* ---------- right palettes ---------- */

const Side = styled.aside`
  width: 655px;
  flex: none;
  display: flex;
  flex-direction: column;
  border-left: 2px solid #e0e0e0;
  background: #ebebeb;
`;

const MapTabs = styled.div`
  flex: none;
  height: 57px;
  margin: 6px 6px 0 7px;
  display: flex;
  align-items: center;
  gap: 4px;
`;

const MenuButton = styled.button`
  width: 66px;
  height: 43px;
  margin-left: auto;
  margin-bottom: 2px;
  padding-left: 2px;
  display: flex;
  align-items: center;
  justify-content: center;
  gap: 10px;
  border-radius: 10px;
  background: #fff;
  box-shadow: 0 0 0 1px #dcdcdc, 0 1px 2px rgba(0, 0, 0, 0.25);
`;

const SearchBox = styled.label`
  flex: none;
  height: 42px;
  margin: 13px 6px 7px 7px;
  padding: 0 10px;
  display: flex;
  align-items: center;
  gap: 14px;
  background: #fff;
  border: 1px solid #d8d8d8;
  border-bottom: 2px solid #b0b0b0;
`;

const SearchInput = styled.input`
  flex: 1;
  min-width: 0;
  outline: none;
  &::placeholder { color: #bcbcbc; opacity: 1; }
`;

const TreeArea = styled.div`
  flex: none;
  height: 734px;
  display: flex;
  background: #f9f9f9;
`;

const Tree = styled.ul`
  flex: 1;
  min-width: 0;
  overflow: hidden;
  background: #fff;
  border-right: 2px solid #e2e2e2;
  border-bottom: 2px solid #e2e2e2;
`;

const TreeRow = styled.li<{ $level: number; $on?: boolean }>`
  height: 48px;
  padding-left: ${p => 9 + p.$level * 28}px;
  display: flex;
  align-items: center;
  gap: 8px;
  background: ${p => (p.$on ? '#dbdbdb' : 'transparent')};
  font-weight: ${p => (p.$on ? 700 : 400)};
  color: #000;
`;

const Twisty = styled.span`
  width: 22px;
  height: 18px;
  display: flex;
`;

const TreeScrollV = styled.div`
  width: 28px;
  padding: 6px 6px;
  &::before {
    content: '';
    display: block;
    width: 16px;
    height: 156px;
    border-radius: 8px;
    background: #c1c1c1;
  }
`;

const TreeScrollH = styled.div`
  flex: none;
  height: 26px;
  padding: 6px 7px;
  background: #f9f9f9;
  &::before {
    content: '';
    display: block;
    width: 81%;
    height: 16px;
    border-radius: 8px;
    background: #c1c1c1;
  }
`;

const IconRow = styled.div<{ $h: number; $pad: number }>`
  flex: none;
  height: ${p => p.$h}px;
  padding-left: ${p => p.$pad}px;
  display: flex;
  align-items: center;
  gap: 24px;
`;

const Spacer = styled.span<{ $w: number }>`
  width: ${p => p.$w}px;
`;

const FlatButton = styled.button`
  display: flex;
`;

const DescRow = styled.div`
  flex: none;
  height: 52px;
  margin: 0 6px 0 9px;
  display: flex;
  align-items: center;
`;

const DescName = styled.span`
  flex: 1;
  padding-right: 34px;
  text-align: center;
`;

const WideButton = styled.button`
  flex: none;
  height: 40px;
  margin: 0 6px 6px 7px;
  border-radius: 10px;
  background: #fff;
  box-shadow: 0 0 0 1px #dadada, 0 1px 2px rgba(0, 0, 0, 0.3);
`;

const TracePalette = styled.div`
  flex: 1;
  display: flex;
  flex-direction: column;
  border-top: 2px solid #e2e2e2;
`;

const TraceRow = styled.div`
  flex: none;
  margin: 7px 6px 0 7px;
  display: flex;
  gap: 4px;
`;

const soft = css`
  height: 57px;
  border-radius: 10px;
  background: #f6f6f6;
  box-shadow: 0 0 0 1px #e0e0e0, 0 1px 2px rgba(0, 0, 0, 0.12);
`;

const SoftButton = styled.button<{ $w?: number }>`
  ${soft}
  width: ${p => p.$w ?? 56}px;
  flex: none;
  display: flex;
  align-items: center;
  justify-content: center;
  gap: 5px;
`;

const StoreyField = styled.label`
  ${soft}
  flex: 1;
  padding: 0 7px;
  display: flex;
  align-items: center;
  gap: 8px;
  svg { color: #8c9294; }
`;

const Rule = styled.hr<{ $top?: number }>`
  flex: none;
  width: 100%;
  height: 2px;
  margin: ${p => p.$top ?? 0}px 0 0;
  border: 0;
  background: #d2d2d2;
`;

const SliderLabel = styled.label`
  flex: none;
  height: 28px;
  margin: 12px 0 3px 5px;
  color: #808080;
`;

const SliderRow = styled.div`
  flex: none;
  height: 62px;
  margin: 0 6px 0 7px;
  padding-top: 7px;
  display: flex;
  gap: 6px;
`;

const Swatch = styled.span`
  width: 24px;
  height: 24px;
  background: #f09a8c;
`;

const SliderTrack = styled.div`
  flex: 1;
  height: 48px;
  margin-left: 3px;
  display: flex;
  align-items: center;
  background: repeating-linear-gradient(90deg, #dadada 0 3px, transparent 3px 54px) left center / calc(100% - 20px) 16px no-repeat;
`;

const Slider = styled.input`
  appearance: none;
  width: 100%;
  height: 32px;
  &::-webkit-slider-runnable-track {
    height: 8px;
    background: rgba(215, 215, 215, 0.55);
  }
  &::-webkit-slider-thumb {
    appearance: none;
    width: 16px;
    height: 32px;
    margin-top: -12px;
    border-radius: 7px;
    background: #f6f6f6;
    box-shadow: 0 0 0 1px #dcdcdc, 0 1px 2px rgba(0, 0, 0, 0.15);
  }
`;

const StatusBar = styled.footer`
  flex: none;
  height: 50px;
  padding: 0 24px 6px 14px;
  display: flex;
  align-items: center;
  border-top: 2px solid #e4e4e4;
`;

const StatusText = styled.span`
  flex: 1;
  color: #1c1c1c;
`;

const Account = styled.a`
  font-family: Lato, "Open Sans", sans-serif;
  font-size: 26px;
  font-weight: 500;
  color: ${K};
  text-decoration: none;
  span { font-weight: 300; }
`;

/* ---------- data ---------- */

type Item = string | [string, 'on' | 'menu' | 'menuOn'];

const row1: Item[] = [
  'home', '|', 'save', '|', 'undo', 'redo', '|', 'find', 'pipette', 'syringe', 'hammerNodes', '|', 'snap', 'ruler',
  ['triangle', 'menuOn'], ['guides', 'menuOn'], ['coords', 'menuOn'], ['grid', 'menu'], ['plane', 'menu'], ['gravity', 'menuOn'],
  ['stamp', 'menu'], ['trace', 'menu'], ['cutPlane', 'menu'], ['groupNodes', 'menu'], '|', 'star', 'houses', 'windowTri', 'keyArrow',
  'cloudList', 'flagList', 'tag', ['penSet', 'menu'], ['northArrow', 'menu'], '|', 'scissors', 'wrench', 'elevate', 'resize', 'stretch',
  'corner', 'arc', 'roofTrim',
];
const row2a: Item[] = [['move', 'menu'], ['rotate', 'menu'], ['mirror', 'menu'], 'multiply'];
const row2b: Item[] = [
  '|', ['persp', 'on'], 'axo', ['axes', 'menu'], '|', 'walker', 'orbit', '|', 'lookTo', 'fitHouse', 'tripod', 'align', 'section', '|',
  ['boxList', 'menu'], '|', ['boxNodes', 'menu'], 'filterHouse', ['cutPlane', 'menu'], '|', 'brush', 'brushDrop', '|', ['camera', 'menu'],
  'cameraList', 'houseLines', '|', 'camcorder', 'sunHouse',
];

const Items = ({ items }: { items: Item[] }) => (
  <>
    {items.map((it, i) => {
      if (it === '|') return <Divider key={i} />;
      const [name, mode] = typeof it === 'string' ? [it, ''] : it;
      const on = mode === 'on' || mode === 'menuOn';
      return (
        <React.Fragment key={i}>
          <ToolButton $on={on} aria-label={name}><Icon name={name} /></ToolButton>
          {mode.startsWith('menu') && (
            <ToolButton $kind="arrow" $on={on} aria-label={`${name} Optionen`}><Chevron dir="down" /></ToolButton>
          )}
        </React.Fragment>
      );
    })}
  </>
);

const planning = ['Wand', 'Tür', 'Fenster', 'Decke', 'Stütze', 'Träger', 'Dach', 'Schale', 'Dachfenster', 'Fassade', 'Treppe', 'Geländer', 'Objekt', 'Lichtquelle', 'Wandabschluss', 'Morph', 'Freifläche', 'Öffnung', 'Raum'];
const views = ['Schnitt', 'Ansicht', 'Innenansicht', 'Detail', 'Arbeitsblatt'];

const ToolItem = ({ name, on, dim }: { name: string; on?: boolean; dim?: boolean }) => (
  <Tool $on={on} $dim={dim}>
    <Glyph viewBox="0 0 60 40" $w={60} $h={40} aria-hidden="true">{TOOL_ICONS[name]}</Glyph>
    {name}
  </Tool>
);

const tree: { level: number; icon: string; label: string; open?: boolean; on?: boolean }[] = [
  { level: 0, icon: 'houseBig', label: 'Ohne Titel', open: true },
  { level: 1, icon: 'planGray', label: 'Geschosse', open: true },
  { level: 2, icon: 'plan', label: '1. OG' },
  { level: 2, icon: 'plan', label: '0. EG' },
  { level: 2, icon: 'plan', label: '-1. UG' },
  { level: 1, icon: 'elevation1', label: 'Schnitte' },
  { level: 1, icon: 'elevation2', label: 'Ansichten' },
  { level: 1, icon: 'interior', label: 'Innenansichten' },
  { level: 1, icon: 'worksheet', label: 'Arbeitsblätter' },
  { level: 1, icon: 'detail', label: 'Details' },
  { level: 1, icon: 'doc3d', label: '3D-Dokumente' },
  { level: 1, icon: 'perspGray', label: '3D', open: true },
  { level: 2, icon: 'perspWhite', label: 'Allgemeine Perspektive', on: true },
  { level: 2, icon: 'axo', label: 'Allgemeine Axonometrie' },
  { level: 2, icon: 'camcorderDark', label: '00 Neue Animationsroute' },
  { level: 1, icon: 'table', label: '' },
];

const options: [string, string, boolean?][] = [
  ['zoomFit', 'keine D…', true], ['tilt', 'keine D…', true], ['scale', '1:100'], ['layers', '00 Arb…'], ['hatch', 'Komple…'],
  ['pen', '04 S/W…'], ['frame', '00 Arb…'], ['replace', 'Keine…'], ['renovation', '00 Rein…'], ['houses', 'Nur Ha…'], ['boxSmall', 'Schatti…'],
];

export default function App() {
  return (
    <Desktop>
      <GlobalStyle />
      <Window>
        <TitleBar>
          <Lights>
            <Light $c="#ec6a5e" $e="#d5574c" aria-label="Schließen" />
            <Light $c="#f4bf50" $e="#dba43a" aria-label="Minimieren" />
            <Light $c="#61c655" $e="#4eac42" aria-label="Vollbild" />
          </Lights>
          <Glyph viewBox="0 0 24 30" $w={24} $h={30} aria-hidden="true">
            <path d="M1 1h15l7 8v20H1z" fill="#fff" stroke="#d6d6d6" strokeWidth="1" />
            <path d="M16 1v8h7" fill="none" stroke="#bbb" strokeWidth="1" />
            <path d="M4 9c1-6 6-8 8 0" fill="none" stroke="#3d55b5" />
            <path d="M6 14h13v12H6zM12 14v4M6 20h4M15 20h4M12 26v-4" fill="none" stroke="#bbb" strokeWidth="2" />
          </Glyph>
          <Title>Ohne Titel</Title>
        </TitleBar>

        <ToolbarStrip>
          <Toolbar $h={71}>
            <Grip $after={8} />
            <Items items={row1} />
          </Toolbar>
        </ToolbarStrip>
        <ToolbarStrip>
          <Toolbar $h={72}>
            <Grip $after={8} />
            <Items items={row2a} />
            <Grip $before={8} $after={8} />
            <ToolButton $kind="label" $on>
              <Icon name="window3d" />
              <LowLabel>3D-Fenster</LowLabel>
            </ToolButton>
            <Items items={row2b} />
            <ToolButton $kind="text"><LowLabel>Projektmarker-Fenster öffnen</LowLabel></ToolButton>
          </Toolbar>
        </ToolbarStrip>
        <ToolbarStrip>
          <Toolbar $full $h={92}>
            <Grip $after={6} $h={42} />
            <PillButton aria-label="Auswahl"><Icon name="marquee" /><Chevron dir="right" /></PillButton>
            <PillButton aria-label="Schnellauswahl"><Icon name="marqueeArrow" /><Chevron dir="right" /></PillButton>
            <PillButton $on aria-label="Magnet"><Icon name="magnet" size={32} /></PillButton>
            <PillButton $tall aria-label="Pfeil"><Icon name="arrow" size={30} /><Chevron dir="right" /></PillButton>
          </Toolbar>
        </ToolbarStrip>

        <Main>
          <Toolbox aria-label="Werkzeugkasten">
            <PaletteHandle $w={118} />
            <ToolItem name="Pfeil" on />
            <ToolItem name="Markierungsrahmen" />
            <SectionHead><Tri />Planung</SectionHead>
            {planning.map(t => <ToolItem key={t} name={t} />)}
            <SectionHead><Tri />Sichten</SectionHead>
            <ViewsArea>
              <ViewsList>{views.map(t => <ToolItem key={t} name={t} dim />)}</ViewsList>
              <ViewsScroll />
            </ViewsArea>
            <SectionHead $last><Tri right />Dokumentation</SectionHead>
          </Toolbox>

          <Center>
            <TabBar role="tablist">
              <TabOverview aria-label="Registerübersicht"><Icon name="grid4" /></TabOverview>
              <Tab role="tab"><BluePlan><Icon name="plan" /></BluePlan>0. EG [0. EG]</Tab>
              <Tab role="tab" $on aria-selected="true"><Icon name="persp" />[3D / Auswahl, Geschoss 0]</Tab>
              <TabNavigator aria-label="Navigator"><Icon name="navHouse" /><Chevron dir="down" /></TabNavigator>
            </TabBar>
            <Canvas>
              <RoofModel />
              <EdgeHandle $side="top" />
              <EdgeHandle $side="bottom" />
              <EdgeHandle $side="left" />
              <EdgeHandle $side="right" />
            </Canvas>
            <ViewBar>
              <NavGroup $w={143} $gap={16}>
                {['zoomPrev', 'zoomNext', 'zoomIn'].map(n => <NavButton key={n} aria-label={n}><Icon name={n} size={30} /></NavButton>)}
              </NavGroup>
              <NavGroup $w={102} $gap={20}>
                {['orbitSmall', 'walkerSmall'].map(n => <NavButton key={n} aria-label={n}><Icon name={n} size={24} /></NavButton>)}
              </NavGroup>
              {options.map(([icon, label, off], i) => (
                <Option key={i} $inset={icon === 'scale'}>
                  <Icon name={icon} size={30} />
                  <OptionSelect disabled={off} aria-label={icon}><option>{label}</option></OptionSelect>
                  <Chevron dir="right" color={off ? '#888' : '#1c1c1c'} />
                </Option>
              ))}
            </ViewBar>
          </Center>

          <Side>
            <PaletteHandle $w={140} />
            <MapTabs>
              <ToolButton $on aria-label="Projektmappe"><Icon name="houseBig" /></ToolButton>
              <Divider $gap={9} />
              <ToolButton aria-label="Ausschnitt-Mappe"><Icon name="houseView" /></ToolButton>
              <ToolButton aria-label="Layoutbuch"><Icon name="layoutBook" /></ToolButton>
              <ToolButton aria-label="Publisher-Sets"><Icon name="publisher" /></ToolButton>
              <MenuButton aria-label="Menü">
                <Glyph viewBox="0 0 24 20" $w={24} $h={20} aria-hidden="true"><path d="M0 1h24M0 10h24M0 19h24" stroke={K} /></Glyph>
                <Chevron dir="right" />
              </MenuButton>
            </MapTabs>
            <SearchBox>
              <Icon name="search" size={30} />
              <SearchInput type="search" placeholder="Projektmappe durchsuchen" aria-label="Projektmappe durchsuchen" />
            </SearchBox>
            <TreeArea>
              <Tree role="tree">
                {tree.map((r, i) => (
                  <TreeRow key={i} $level={r.level} $on={r.on} role="treeitem" aria-selected={!!r.on}>
                    <Twisty>{r.open && <Chevron dir="down" color="#7b8082" size={18} />}</Twisty>
                    <Icon name={r.icon} />
                    {r.label}
                  </TreeRow>
                ))}
              </Tree>
              <TreeScrollV />
            </TreeArea>
            <TreeScrollH />
            <IconRow $h={70} $pad={18}>
              <FlatButton aria-label="Neu"><Icon name="add" /></FlatButton>
              <FlatButton aria-label="Einstellungen"><Icon name="list" /></FlatButton>
              <FlatButton aria-label="Löschen"><Icon name="remove" /></FlatButton>
            </IconRow>
            <SectionHead $panel><Tri />Beschreibungen</SectionHead>
            <DescRow>
              <Icon name="persp" size={24} />
              <DescName>Allgemeine Perspektive</DescName>
            </DescRow>
            <WideButton>Einstellungen…</WideButton>
            <TracePalette>
              <PaletteHandle $w={140} />
              <TraceRow>
                <SoftButton disabled aria-label="Transparentpause"><Icon name="traceBig" /></SoftButton>
                <StoreyField>
                  <Icon name="plan" />
                  <OptionSelect disabled aria-label="Referenzgeschoss"><option>0. EG</option></OptionSelect>
                  <Chevron dir="right" color="#999" />
                </StoreyField>
              </TraceRow>
              <IconRow $h={78} $pad={17}>
                <FlatButton aria-label="Tauschen"><Icon name="swap" /></FlatButton>
                <Spacer $w={36} />
                <FlatButton aria-label="Verschieben"><Icon name="moveBlue" /></FlatButton>
                <FlatButton aria-label="Drehen"><Icon name="rotateBlue" /></FlatButton>
                <FlatButton aria-label="Zurücksetzen"><Icon name="reset" /></FlatButton>
                <FlatButton aria-label="Aktualisieren"><Icon name="refresh" /></FlatButton>
              </IconRow>
              <Rule />
              <SliderLabel htmlFor="ref">Transparentpause:</SliderLabel>
              <SliderRow>
                <SoftButton disabled aria-label="Farbe"><Swatch /><Chevron dir="right" color="#999" /></SoftButton>
                <SliderTrack><Slider id="ref" type="range" defaultValue={100} disabled /></SliderTrack>
                <SoftButton $w={26} disabled aria-label="Mehr"><Chevron dir="right" color="#999" /></SoftButton>
              </SliderRow>
              <SliderLabel htmlFor="act">Aktiv:</SliderLabel>
              <SliderRow>
                <SoftButton disabled aria-label="Farben"><Icon name="colorWheel" size={32} /><Chevron dir="right" color="#999" /></SoftButton>
                <SliderTrack><Slider id="act" type="range" defaultValue={100} disabled /></SliderTrack>
                <Spacer $w={26} />
              </SliderRow>
              <Rule $top={15} />
              <IconRow $h={72} $pad={77}>
                <FlatButton aria-label="Ziehen"><Icon name="hand" /></FlatButton>
                <FlatButton aria-label="Überlagern"><Icon name="overlap" /></FlatButton>
                <FlatButton aria-label="Teiler"><Icon name="splitter" /></FlatButton>
                <FlatButton aria-label="Schraffuren ausblenden"><Icon name="hideHatch" /></FlatButton>
              </IconRow>
            </TracePalette>
          </Side>
        </Main>

        <StatusBar>
          <StatusText>Klicken Sie mit dem Cursor auf ein Element oder ziehen Sie einen Auswahlbereich auf. Drücken Sie für Morphbearbeitung Strg/Ctrl+Umsch, um zwischen Element-/Unterelement-Auswahl zu wechseln.</StatusText>
          <FlatButton aria-label="Fenster"><Icon name="windows" size={32} /></FlatButton>
          <Grip $before={20} $after={22} $h={30} />
          <Account href="#">GRAPHISOFT <span>ID</span></Account>
        </StatusBar>
      </Window>
    </Desktop>
  );
}
